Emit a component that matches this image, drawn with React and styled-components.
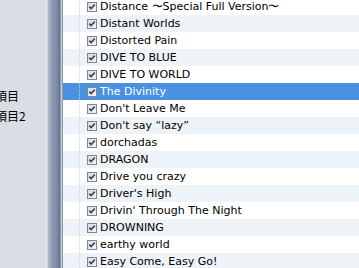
import styled, { createGlobalStyle } from "styled-components";

const songs = [
  "Distance 〜Special Full Version〜",
  "Distant Worlds",
  "Distorted Pain",
  "DIVE TO BLUE",
  "DIVE TO WORLD",
  "The Divinity",
  "Don't Leave Me",
  "Don't say “lazy”",
  "dorchadas",
  "DRAGON",
  "Drive you crazy",
  "Driver's High",
  "Drivin' Through The Night",
  "DROWNING",
  "earthy world",
  "Easy Come, Easy Go!",
];

const SELECTED = 5;

function CheckBox() {
  return (
    <svg width="10" height="10" viewBox="0 0 10 10">
      <defs>
        <linearGradient id="cb" x1="0" y1="0" x2="1" y2="1">
          <stop offset="0" stopColor="#d6d9de" />
          <stop offset="1" stopColor="#f4f5f7" />
        </linearGradient>
      </defs>
      <rect x="0.5" y="0.5" width="9" height="9" fill="url(#cb)" stroke="#7f8794" />
      <path d="M2.3 4.6 L4.1 6.6 L7.8 2.6" fill="none" stroke="#3f4650" strokeWidth="1.6" />
    </svg>
  );
}

export default function App() {
  return (
    <>
      <GlobalStyle />
      <Window>
        <Sidebar>
          <SideItem>項目</SideItem>
          <SideItem>項目2</SideItem>
        </Sidebar>
        <Splitter />
        <ListPane>
          <Rows>
            {songs.map((title, i) => (
              <Row key={title} $odd={i % 2 === 1} $selected={i === SELECTED}>
                <IconCell />
                <TitleCell>
                  <CheckBox />
                  <Title>{title}</Title>
                </TitleCell>
              </Row>
            ))}
          </Rows>
        </ListPane>
      </Window>
    </>
  );
}

//----- Styled Components

const GlobalStyle = createGlobalStyle`
  html, body {
    margin: 0;
    padding: 0;
    overflow: hidden;
  }
  body {
    font-family: "DejaVu Sans", Verdana, sans-serif;
  }
`;

const Window = styled.div`
  display: flex;
  width: 359px;
  height: 268px;
  overflow: hidden;
  background-color: #ffffff;
`;

const Sidebar = styled.div`
  width: 46px;
  flex-shrink: 0;
  background-color: #d9dde6;
  overflow: hidden;
  display: flex;
  flex-direction: column;
  padding-top: 89px;
  gap: 6px;
`;

const SideItem = styled.div`
  font-family: "Noto Sans CJK JP", sans-serif;
  font-size: 12px;
  line-height: 14px;
  color: #000000;
  white-space: nowrap;
  text-indent: -5px;
`;

const Splitter = styled.div`
  width: 16px;
  flex-shrink: 0;
  background: linear-gradient(
    to right,
    #e6e9ee 0px,
    #e6e9ee 1px,
    #b3bccb 2px,
    #a2adc0 4px,
    #8e9bb3 6px,
    #7f8ea9 10px,
    #6e7d98 13px,
    #5f6d86 14px,
    #c5ccd7 15px,
    #c5ccd7 16px
  );
`;

const ListPane = styled.div`
  flex: 1;
  border-left: 1px solid #8f99a8;
  overflow: hidden;
`;

const Rows = styled.div`
  margin-top: -2px;
`;

const Row = styled.div`
  display: flex;
  height: 17px;
  align-items: center;
  background-color: ${(p) => (p.$selected ? "#4a92e1" : p.$odd ? "#eef3f8" : "#ffffff")};
  color: ${(p) => (p.$selected ? "#ffffff" : "#000000")};
`;

const IconCell = styled.div`
  width: 16px;
  height: 100%;
  flex-shrink: 0;
  border-right: 1px dotted #d4d8de;
`;

const TitleCell = styled.div`
  display: flex;
  align-items: center;
  gap: 3px;
  padding-left: 7px;
  white-space: nowrap;
`;

const Title = styled.span`
  font-size: 11px;
  line-height: 17px;
`;
